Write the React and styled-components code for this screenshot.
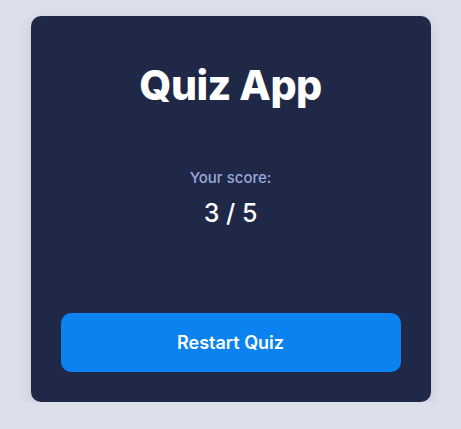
import React from 'react';
import styled, { createGlobalStyle } from 'styled-components';

const GlobalStyle = createGlobalStyle`
    * {
        box-sizing: border-box;
    }
    body {
        margin: 0;
        background-color: #dcdfea;
        font-family: Inter, "Noto Sans", sans-serif;
    }
`;

const Page = styled.main`
    display: flex;
    justify-content: center;
    padding-top: 16px;
`;

const Card = styled.section`
    width: 400px;
    height: 386px;
    background-color: #1f2847;
    border-radius: 10px;
    box-shadow: 0 4px 12px rgba(31, 40, 71, 0.12);
    padding: 0 30px 30px;
    display: flex;
    flex-direction: column;
    align-items: center;
`;

const Title = styled.h1`
    margin: 49px 0 0;
    color: #ffffff;
    font-size: 41px;
    font-weight: 800;
    line-height: 1;
    letter-spacing: -0.5px;
`;

const ScoreBox = styled.div`
    margin-top: 63px;
    display: flex;
    flex-direction: column;
    align-items: center;
    gap: 11px;
`;

const ScoreLabel = styled.p`
    margin: 0;
    color: #9aa6d9;
    font-size: 15px;
    font-weight: 500;
    line-height: 1.2;
`;

const ScoreValue = styled.p`
    margin: 0;
    color: #ffffff;
    font-size: 25px;
    font-weight: 500;
    line-height: 1.2;
`;

const RestartButton = styled.button`
    margin-top: auto;
    width: 100%;
    height: 59px;
    border: none;
    border-radius: 10px;
    background-color: #0a82f0;
    color: #ffffff;
    font-family: inherit;
    font-size: 18px;
    font-weight: 600;
    cursor: pointer;
`;

export default function App() {
    return (
    <>
    <GlobalStyle />
    <Page>
        <Card>
            <Title>Quiz App</Title>
            <ScoreBox>
                <ScoreLabel>Your score:</ScoreLabel>
                <ScoreValue>3 / 5</ScoreValue>
            </ScoreBox>
            <RestartButton>Restart Quiz</RestartButton>
        </Card>
    </Page>
    </>
    );
}
